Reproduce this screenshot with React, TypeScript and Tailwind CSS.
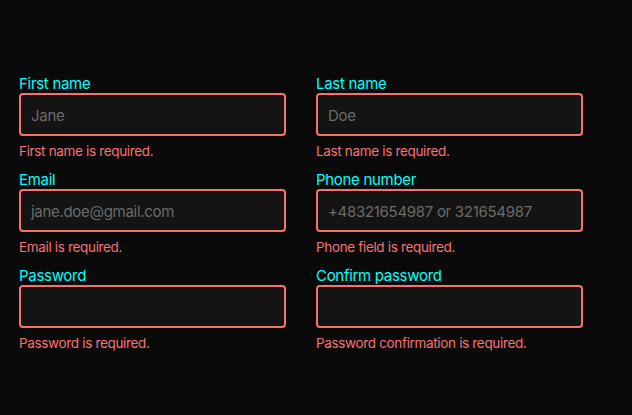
import React from 'react'

const fields = [
    { label: "First name", placeholder: "Jane", error: "First name is required.", type: "text" },
    { label: "Last name", placeholder: "Doe", error: "Last name is required.", type: "text" },
    { label: "Email", placeholder: "jane.doe@gmail.com", error: "Email is required.", type: "email" },
    { label: "Phone number", placeholder: "+48321654987 or 321654987", error: "Phone field is required.", type: "tel" },
    { label: "Password", placeholder: "", error: "Password is required.", type: "password" },
    { label: "Confirm password", placeholder: "", error: "Password confirmation is required.", type: "password" },
]

export default function App() {
    return (
        <div className="min-h-[415px] w-full bg-[#0a0a0a] pt-[75px] px-[19px]" style={{ fontFamily: "Inter, 'Noto Sans', sans-serif" }}>
            <form className="grid grid-cols-[267px_267px] gap-x-[30px] gap-y-[11px]">
                {fields.map((f) => (
                    <div key={f.label} className="flex flex-col">
                        <label className="text-[15px] leading-[18px] tracking-[-0.02em] text-[#00ffff]">{f.label}</label>
                        <input
                            type={f.type}
                            placeholder={f.placeholder}
                            className="h-[43px] w-full rounded-[4px] border-2 border-[#f87171] bg-[#141414] px-[10px] pt-[2px] text-[15px] tracking-[-0.02em] text-white outline-none placeholder:text-[#6b6b6b]"
                        />
                        <p className="mt-[7px] text-[13.5px] leading-[17px] tracking-[-0.025em] text-[#f87171]">{f.error}</p>
                    </div>
                ))}
            </form>
        </div>
    )
}
